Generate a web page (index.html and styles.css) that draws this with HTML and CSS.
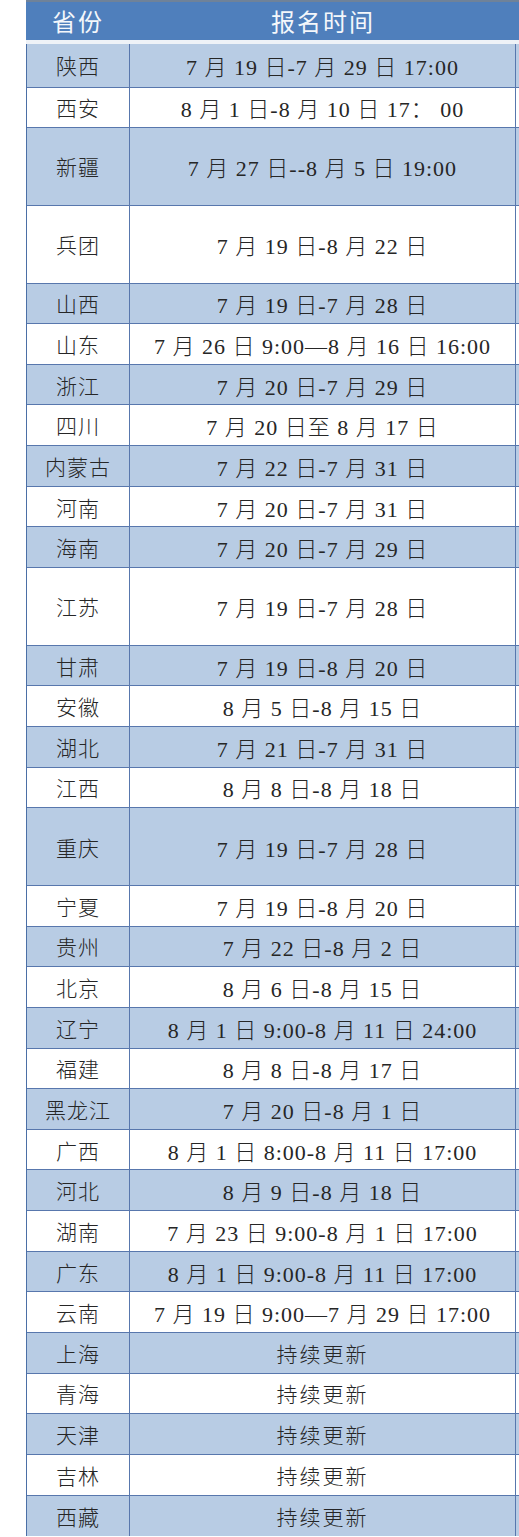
FILE: index.html
```html
<!DOCTYPE html>
<html lang="zh">
<head>
<meta charset="utf-8">
<title>报名时间</title>
<link rel="stylesheet" href="styles.css">
</head>
<body>
<div class="sheet">
  <div class="head">
    <div class="hcell">省份</div>
    <div class="hcell">报名时间</div>
  </div>
  <div class="gap"></div>
  <div class="rows">
    <div class="row blue first"><div class="prov">陕西</div><div class="time">7 月 19 日-7 月 29 日 17:00</div><div class="tail"></div></div>
    <div class="row"><div class="prov">西安</div><div class="time">8 月 1 日-8 月 10 日 17：&nbsp;00</div><div class="tail"></div></div>
    <div class="row blue tall"><div class="prov">新疆</div><div class="time">7 月 27 日--8 月 5 日 19:00</div><div class="tail"></div></div>
    <div class="row tall"><div class="prov">兵团</div><div class="time">7 月 19 日-8 月 22 日</div><div class="tail"></div></div>
    <div class="row blue"><div class="prov">山西</div><div class="time">7 月 19 日-7 月 28 日</div><div class="tail"></div></div>
    <div class="row"><div class="prov">山东</div><div class="time">7 月 26 日 9:00—8 月 16 日 16:00</div><div class="tail"></div></div>
    <div class="row blue"><div class="prov">浙江</div><div class="time">7 月 20 日-7 月 29 日</div><div class="tail"></div></div>
    <div class="row"><div class="prov">四川</div><div class="time">7 月 20 日至 8 月 17 日</div><div class="tail"></div></div>
    <div class="row blue"><div class="prov">内蒙古</div><div class="time">7 月 22 日-7 月 31 日</div><div class="tail"></div></div>
    <div class="row"><div class="prov">河南</div><div class="time">7 月 20 日-7 月 31 日</div><div class="tail"></div></div>
    <div class="row blue"><div class="prov">海南</div><div class="time">7 月 20 日-7 月 29 日</div><div class="tail"></div></div>
    <div class="row tall"><div class="prov">江苏</div><div class="time">7 月 19 日-7 月 28 日</div><div class="tail"></div></div>
    <div class="row blue"><div class="prov">甘肃</div><div class="time">7 月 19 日-8 月 20 日</div><div class="tail"></div></div>
    <div class="row"><div class="prov">安徽</div><div class="time">8 月 5 日-8 月 15 日</div><div class="tail"></div></div>
    <div class="row blue"><div class="prov">湖北</div><div class="time">7 月 21 日-7 月 31 日</div><div class="tail"></div></div>
    <div class="row"><div class="prov">江西</div><div class="time">8 月 8 日-8 月 18 日</div><div class="tail"></div></div>
    <div class="row blue tall"><div class="prov">重庆</div><div class="time">7 月 19 日-7 月 28 日</div><div class="tail"></div></div>
    <div class="row"><div class="prov">宁夏</div><div class="time">7 月 19 日-8 月 20 日</div><div class="tail"></div></div>
    <div class="row blue"><div class="prov">贵州</div><div class="time">7 月 22 日-8 月 2 日</div><div class="tail"></div></div>
    <div class="row"><div class="prov">北京</div><div class="time">8 月 6 日-8 月 15 日</div><div class="tail"></div></div>
    <div class="row blue"><div class="prov">辽宁</div><div class="time">8 月 1 日 9:00-8 月 11 日 24:00</div><div class="tail"></div></div>
    <div class="row"><div class="prov">福建</div><div class="time">8 月 8 日-8 月 17 日</div><div class="tail"></div></div>
    <div class="row blue"><div class="prov">黑龙江</div><div class="time">7 月 20 日-8 月 1 日</div><div class="tail"></div></div>
    <div class="row"><div class="prov">广西</div><div class="time">8 月 1 日 8:00-8 月 11 日 17:00</div><div class="tail"></div></div>
    <div class="row blue"><div class="prov">河北</div><div class="time">8 月 9 日-8 月 18 日</div><div class="tail"></div></div>
    <div class="row"><div class="prov">湖南</div><div class="time">7 月 23 日 9:00-8 月 1 日 17:00</div><div class="tail"></div></div>
    <div class="row blue"><div class="prov">广东</div><div class="time">8 月 1 日 9:00-8 月 11 日 17:00</div><div class="tail"></div></div>
    <div class="row"><div class="prov">云南</div><div class="time">7 月 19 日 9:00—7 月 29 日 17:00</div><div class="tail"></div></div>
    <div class="row blue"><div class="prov">上海</div><div class="time cjk">持续更新</div><div class="tail"></div></div>
    <div class="row"><div class="prov">青海</div><div class="time cjk">持续更新</div><div class="tail"></div></div>
    <div class="row blue"><div class="prov">天津</div><div class="time cjk">持续更新</div><div class="tail"></div></div>
    <div class="row"><div class="prov">吉林</div><div class="time cjk">持续更新</div><div class="tail"></div></div>
    <div class="row blue last"><div class="prov">西藏</div><div class="time cjk">持续更新</div><div class="tail"></div></div>
  </div>
</div>
</body>
</html>
```

FILE: styles.css
```css
html, body {
  margin: 0;
  padding: 0;
  background: #ffffff;
}

body {
  width: 519px;
  height: 1537px;
  overflow: hidden;
}

.sheet {
  margin-left: 26px;
  width: 493px;
}

.head {
  height: 40px;
  box-sizing: border-box;
  border-top: 2px solid #6f8299;
  background: #4f7fbc;
  display: grid;
  grid-template-columns: 104px 386px 3px;
}

.hcell {
  display: flex;
  align-items: center;
  justify-content: center;
  color: #f4f7fb;
  font-family: "Noto Sans CJK SC", sans-serif;
  font-size: 24px;
  letter-spacing: 2px;
  padding-bottom: 2px;
}

.gap {
  height: 4px;
  background: #eef2f7;
}

.rows {
  border-left: 1px solid #4b6fa6;
}

.row {
  display: grid;
  grid-template-columns: 103px 386px 3px;
  height: 40.65px;
  box-sizing: border-box;
  border-bottom: 1px solid #5877ad;
  background: #ffffff;
  color: #262626;
}

.row.blue {
  background: #b8cce4;
}

.row.first {
  height: 43.5px;
}

.row.tall {
  height: 77.7px;
}

.row.last {
  border-bottom: none;
}

.prov {
  display: flex;
  align-items: center;
  justify-content: center;
  border-right: 1px solid #5877ad;
  font-family: "Noto Sans CJK SC", sans-serif;
  font-size: 21px;
  letter-spacing: 1px;
  font-weight: 300;
}

.time {
  display: flex;
  align-items: center;
  justify-content: center;
  border-right: 1px solid #5877ad;
  font-family: "Liberation Serif", "Noto Sans CJK SC", serif;
  font-size: 22px;
  letter-spacing: 1px;
  font-weight: 300;
  white-space: pre;
}

.time.cjk {
  font-family: "Noto Sans CJK SC", sans-serif;
  font-size: 21px;
  letter-spacing: 2px;
}

.tail {
  background: inherit;
}
```
